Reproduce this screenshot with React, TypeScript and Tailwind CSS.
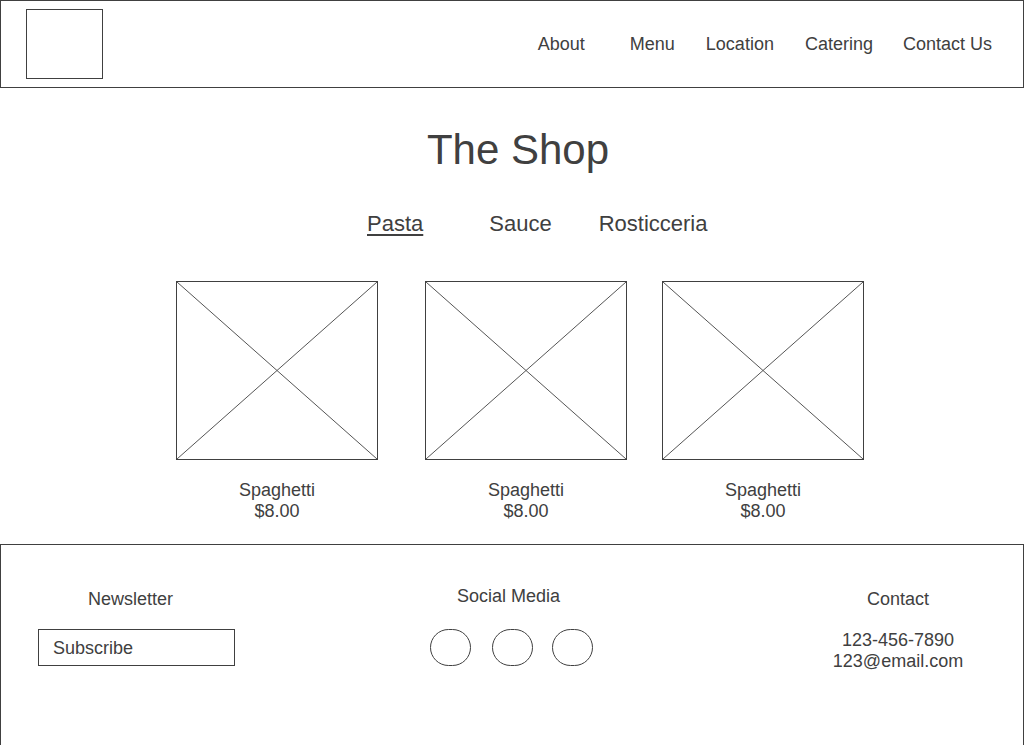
const font = { fontFamily: '"Liberation Sans", Arial, sans-serif' };

function NavLink({ label, className = "" }: { label: string; className?: string }) {
  return <span className={`text-[18px] leading-[21px] ${className}`}>{label}</span>;
}

function Placeholder() {
  return (
    <div className="h-[179px] w-[202px] border border-[#404040]">
      <svg width="200" height="177" viewBox="0 0 200 177" className="block">
        <line x1="0" y1="0" x2="200" y2="177" stroke="#555" strokeWidth="1" />
        <line x1="200" y1="0" x2="0" y2="177" stroke="#555" strokeWidth="1" />
      </svg>
    </div>
  );
}

function Product({ className = "" }: { className?: string }) {
  return (
    <div className={`flex w-[202px] flex-col items-center ${className}`}>
      <Placeholder />
      <div className="mt-[20px] text-center text-[18px] leading-[21px]">
        <div>Spaghetti</div>
        <div>$8.00</div>
      </div>
    </div>
  );
}

export default function App() {
  return (
    <div className="h-[745px] w-[1024px] overflow-hidden bg-white text-[#404040]" style={font}>
      {/* header */}
      <header className="flex h-[88px] items-center border border-[#404040] pl-[25px] pr-[31px]">
        <div className="h-[70px] w-[77px] border border-[#404040]" />
        <nav className="ml-auto flex items-center">
          <NavLink label="About" />
          <NavLink label="Menu" className="ml-[45px]" />
          <NavLink label="Location" className="ml-[31px]" />
          <NavLink label="Catering" className="ml-[31px]" />
          <NavLink label="Contact Us" className="ml-[30px]" />
        </nav>
      </header>

      {/* shop */}
      <main className="h-[456px] pt-[41px]">
        <h1 className="pl-[12px] text-center text-[42px] leading-none">The Shop</h1>
        <div className="mt-[42px] flex pl-[367px] text-[22px] leading-none">
          <span className="underline underline-offset-[3px]">Pasta</span>
          <span className="ml-[66px]">Sauce</span>
          <span className="ml-[47px]">Rosticceria</span>
        </div>
        <div className="mt-[46px] flex pl-[176px]">
          <Product />
          <Product className="ml-[47px]" />
          <Product className="ml-[35px]" />
        </div>
      </main>

      {/* footer */}
      <footer className="flex h-[201px] border-x border-t border-[#404040] pl-[37px] text-[18px] leading-[21px]">
        <div className="w-[197px] pt-[44px]">
          <div className="pl-[50px]">Newsletter</div>
          <div className="mt-[19px] flex h-[37px] items-center border border-[#404040] pl-[14px] pt-[2px]">
            Subscribe
          </div>
        </div>
        <div className="ml-[195px] pt-[41px]">
          <div className="pl-[27px]">Social Media</div>
          <div className="mt-[22px] flex">
            <div className="h-[37px] w-[41px] rounded-full border border-[#404040]" />
            <div className="ml-[21px] h-[37px] w-[41px] rounded-full border border-[#404040]" />
            <div className="ml-[19px] h-[37px] w-[41px] rounded-full border border-[#404040]" />
          </div>
        </div>
        <div className="ml-auto mr-[45px] w-[160px] pt-[44px] text-center">
          <div>Contact</div>
          <div className="mt-[20px]">123-456-7890</div>
          <div>123@email.com</div>
        </div>
      </footer>
    </div>
  );
}
